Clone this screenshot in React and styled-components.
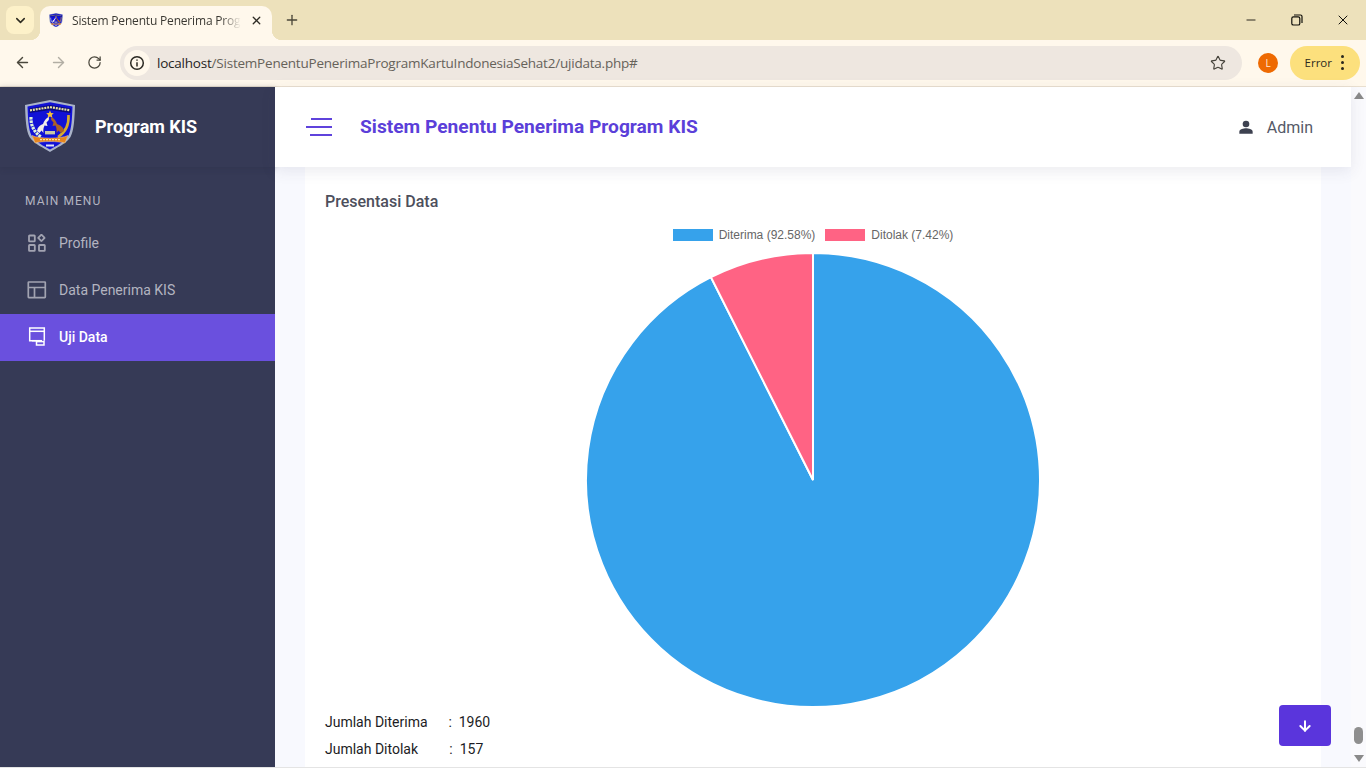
import React from "react";
import styled, { createGlobalStyle } from "styled-components";
import { ChevronDown, X, Plus, ArrowLeft, ArrowRight, RotateCw, Star, Minus, ArrowDown } from "lucide-react";

const Global = createGlobalStyle`
  html, body { margin: 0; padding: 0; height: 100%; overflow: hidden; }
  body { font-family: Roboto, "Liberation Sans", sans-serif; }
  * { box-sizing: border-box; }
`;

const Page = styled.div`
  width: 1366px; height: 768px; display: flex; flex-direction: column; overflow: hidden; background: #e4e4e4;
`;
const TabStrip = styled.div`
  height: 40px; flex: none; background: #ede1bb; display: flex; align-items: flex-end; padding-left: 6px;
`;
const TabSearch = styled.div`
  width: 28px; height: 28px; margin: 0 6px 6px 0; border-radius: 8px; background: #fdf1c9;
  display: flex; align-items: center; justify-content: center; color: #2d2a1f;
`;
const Tab = styled.div`
  position: relative; width: 232px; height: 34px; background: #fff8ec; border-radius: 10px 10px 0 0;
  display: flex; align-items: center; padding: 0 9px 6px 9px; gap: 9px;
  &::before, &::after { content: ""; position: absolute; bottom: 0; width: 10px; height: 10px; }
  &::before { left: -10px; background: radial-gradient(circle at 0 0, transparent 10px, #fff8ec 10.5px); }
  &::after { right: -10px; background: radial-gradient(circle at 100% 0, transparent 10px, #fff8ec 10.5px); }
`;
const TabTitle = styled.span`
  flex: 1; font: 12px "Open Sans", "Noto Sans", sans-serif; letter-spacing: -0.18px; color: #3b3933; white-space: nowrap; overflow: hidden;
  -webkit-mask-image: linear-gradient(90deg, #000 88%, transparent 100%);
  mask-image: linear-gradient(90deg, #000 88%, transparent 100%);
`;
const NewTab = styled.div`
  width: 28px; height: 28px; margin: 0 0 6px 6px; display: flex; align-items: center; justify-content: center; color: #4a4638;
`;
const WindowButtons = styled.div`
  margin-left: auto; align-self: flex-start; height: 40px; display: flex; color: #100f0a;
`;
const WinBtn = styled.div`
  width: 46px; height: 40px; display: flex; align-items: center; justify-content: center;
`;
const Toolbar = styled.div`
  height: 47px; flex: none; background: #fff8ec; border-bottom: 1px solid #e9dfcf; display: flex; align-items: center;
  padding: 0 6px 1px 8px;
`;
const NavBtn = styled.div`
  width: 28px; height: 28px; margin-right: 8px; display: flex; align-items: center; justify-content: center;
  color: ${p => p.$off ? "#b2aea4" : "#4a473c"};
`;
const Omnibox = styled.div`
  margin-left: 4px; flex: 1; height: 34px; border-radius: 17px; background: #eee7e0; display: flex; align-items: center; padding: 0 16px 0 4px;
`;
const InfoChip = styled.div`
  width: 26px; height: 26px; border-radius: 50%; background: #fff8ec; display: flex; align-items: center; justify-content: center; margin-right: 7px;
`;
const Url = styled.div`
  flex: 1; font: 13.5px "Open Sans", "Noto Sans", sans-serif; letter-spacing: -0.22px; color: #66625a; white-space: nowrap;
  b { font-weight: 400; color: #26241f; }
`;
const Avatar = styled.div`
  width: 20px; height: 20px; margin: 0 12px 0 16px; border-radius: 50%; background: #ee6a02; color: #ffe9d6;
  font: 10px "Open Sans", sans-serif; display: flex; align-items: center; justify-content: center;
`;
const ErrorPill = styled.div`
  width: 70px; height: 34px; border-radius: 17px; background: #fce07d; display: flex; align-items: center; justify-content: flex-end; gap: 9px;
  padding-right: 16px; font: 11.5px "Open Sans", sans-serif; color: #2c2a20;
`;
const Dots = styled.div`
  display: flex; flex-direction: column; gap: 3px;
  i { display: block; width: 3px; height: 3px; border-radius: 50%; background: #2a281e; }
`;
const Viewport = styled.div`
  height: 680px; flex: none; display: flex; background: #f8f9fe;
`;
const Sidebar = styled.aside`
  width: 275px; flex: none; background: #363a56; display: flex; flex-direction: column;
`;
const Brand = styled.div`
  height: 80px; flex: none; display: flex; align-items: center; padding: 0 0 2px 25px; gap: 20px;
  font-size: 18px; font-weight: 700; color: #fff;
  background: #363a56; box-shadow: 0 1px 6px rgba(40,42,66,.3);
`;
const MenuLabel = styled.div`
  margin: 27px 0 12px 25px; font-size: 12px; font-weight: 400; letter-spacing: 1.05px; line-height: 14px; color: #b3b4c0;
`;
const MenuItem = styled.div`
  height: 47px; display: flex; align-items: center; padding: 0 0 2px 27px; font-size: 14px;
  background: ${p => p.$active ? "#6a50de" : "transparent"};
  color: ${p => p.$active ? "#fff" : "#b3b4c0"};
  font-weight: ${p => p.$active ? 500 : 400};
`;
const MenuIcon = styled.span`
  width: 20px; height: 20px; margin-right: 12px; display: flex; align-items: center; justify-content: center;
  color: ${p => p.$active ? "#fff" : "#a2a3b1"};
`;
const Main = styled.main`
  position: relative; flex: 1; display: flex; flex-direction: column; min-width: 0;
`;
const TopBar = styled.header`
  position: relative; z-index: 1; height: 80px; flex: none; background: #fff; box-shadow: 0 4px 14px rgba(60,60,100,.1);
  display: flex; align-items: center; padding: 0 38px 0 31px;
`;
const Hamburger = styled.div`
  width: 26px; display: flex; flex-direction: column; align-items: flex-end; gap: 6px; margin-right: 28px;
`;
const BurgerLine = styled.i`
  display: block; height: 2px; background: #5f43dc; width: ${p => p.$w}px;
`;
const AppTitle = styled.h1`
  margin: 0 0 1px; font-size: 19.2px; line-height: 22px; font-weight: 700; color: #5b3fd9; flex: 1;
`;
const UserBox = styled.div`
  display: flex; align-items: center; gap: 13px; font-size: 16px; color: #555a68;
`;
const Content = styled.div`
  flex: 1; min-height: 0; padding: 0 30px; overflow: hidden;
`;
const Card = styled.section`
  height: 100%; background: #fff; padding: 25px 20px 0; display: flex; flex-direction: column; align-items: flex-start;
`;
const CardTitle = styled.h2`
  margin: 0; font-size: 16px; font-weight: 500; line-height: 19px; color: #4d4f5c;
`;
const Legend = styled.div`
  align-self: center; margin-top: 17px; display: flex; gap: 10px; font: 12px "Liberation Sans", Arial, sans-serif; color: #666; line-height: 14px;
`;
const LegendItem = styled.div`
  display: flex; align-items: center; gap: 6px;
`;
const Swatch = styled.i`
  display: block; width: 40px; height: 12px; background: ${p => p.$c};
`;
const Chart = styled.svg`
  align-self: center; margin-top: 10px; flex: none; display: block;
`;
const Stat = styled.div`
  font-size: 14px; line-height: 27px; color: #1c1c24; white-space: pre;
`;
const Stats = styled.div`
  margin-top: 1px;
`;
const FloatBtn = styled.div`
  position: absolute; right: 20px; bottom: 21px; width: 52px; height: 41px; border-radius: 4px; background: #5a35dc;
  display: flex; align-items: center; justify-content: center; color: #fff;
`;
const Scrollbar = styled.div`
  width: 15px; flex: none; background: #fafafd; display: flex; flex-direction: column; align-items: center; padding: 5px 0;
`;
const Arrow = styled.i`
  display: block; width: 0; height: 0; border-left: 5px solid transparent; border-right: 5px solid transparent;
  ${p => p.$down ? "border-top: 7px solid #8a8a8a;" : "border-bottom: 7px solid #8a8a8a;"}
`;
const Thumb = styled.div`
  width: 9px; height: 17px; border-radius: 5px; background: #8f8f8f; margin: auto 0 11px;
`;

const Logo = ({ size = 50 }) => (
  <svg width={size} height={size * 1.04} viewBox="0 0 50 52">
    <path d="M0 5 L25 0 L50 5 C49.5 20 49 30 45.5 37 C41 44 31 48 25 52 C19 48 9 44 4.5 37 C1 30 .5 20 0 5Z" fill="#aab3c8" />
    <path d="M2.5 6.5 L25 2.2 L47.5 6.5 C47 20 46.5 29 43.5 35.5 C39 42.5 31 46 25 49.5 C19 46 11 42.5 6.5 35.5 C3.5 29 3 20 2.5 6.5Z" fill="#1212d6" />
    <path d="M4 8.5 L25 5 L46 8.5 L45.5 13 L25 10 L4.5 13Z" fill="#0b0b7c" />
    <path d="M5 10.3 L25 7.2 L45 10.3" fill="none" stroke="#e9e3a2" strokeWidth="2.2" strokeDasharray="2 .9" />
    <path d="M25 10.5 l1.1 2.5 2.7.3-2 1.8.6 2.7-2.4-1.4-2.4 1.4.6-2.7-2-1.8 2.7-.3z" fill="#f3c13a" />
    <path d="M6 17 C5.5 25 9 32 16 37" fill="none" stroke="#dff3d8" strokeWidth="3.2" strokeDasharray="2.6 .8" />
    <path d="M43.5 15 C44 24 41 32 33 37" fill="none" stroke="#d6a92e" strokeWidth="2.6" />
    <path d="M12 31 C12.5 27 15 25 18 24 C19 21 21 18 24 17 L23.8 20 L21.5 22.5 L22.5 26 L19.5 25.5 C18.5 28 18 30 18.5 33 L16.5 30.5 L14.5 33Z" fill="#f4efe8" />
    <path d="M39 31 C38.5 27 35 25 32 24 C31 21 29 18 26 17 L26.2 20 L28.5 22.5 L27.5 26 L30.5 25.5 C31.5 28 32 30 31.5 33 L33.5 30.5 L36 33Z" fill="#a9602a" />
    <rect x="20" y="31" width="10" height="3.4" fill="#c9c9a6" />
    <path d="M7 35.5 C14 39 36 39 43 35.5 L40 43 C33 41 17 41 10 43Z" fill="#e6841f" stroke="#f2d49a" strokeWidth=".5" />
    <path d="M15 39.6 H35" stroke="#ffe5a0" strokeWidth="1.4" strokeDasharray="2 1" />
    <rect x="21" y="44.5" width="8" height="2" fill="#dfe3f3" />
  </svg>
);

const ProfileIcon = () => (
  <svg width="18" height="18" viewBox="0 0 18 18" fill="none" stroke="currentColor" strokeWidth="1.8">
    <rect x="1" y="1.5" width="5.8" height="5.8" rx=".6" />
    <rect x="11.1" y="1.6" width="4.6" height="4.6" rx=".4" transform="rotate(45 13.4 3.9)" />
    <rect x="1" y="11" width="5.8" height="5.8" rx=".6" />
    <rect x="11" y="11" width="5.8" height="5.8" rx=".6" />
  </svg>
);
const TableIcon = () => (
  <svg width="20" height="18" viewBox="0 0 20 18" fill="none" stroke="currentColor" strokeWidth="1.7">
    <rect x="1.3" y="1" width="17" height="15.6" rx=".5" />
    <path d="M1.3 6.5 H18.3 M7.5 6.5 V16.6" />
  </svg>
);
const TestIcon = () => (
  <svg width="18" height="19" viewBox="0 0 18 19" fill="none" stroke="currentColor" strokeWidth="1.5">
    <path d="M10 13.7 H1.7 V1 H16.3 V13.7" />
    <path d="M1.7 4.3 H16.3" />
    <path d="M4 13.7 H14" />
    <rect x="8.5" y="14.6" width="7.5" height="3.4" />
  </svg>
);
const UserIcon = () => (
  <svg width="16" height="16" viewBox="0 0 24 24" fill="#3d4150">
    <circle cx="12" cy="7.5" r="5" /><path d="M2 22 v-3 c0-3.5 6.5-5 10-5 s10 1.5 10 5 v3z" />
  </svg>
);
const InfoIcon = () => (
  <svg width="16" height="16" viewBox="0 0 16 16" fill="none" stroke="#2b2922" strokeWidth="1.5">
    <circle cx="8" cy="8" r="6.3" /><path d="M8 7.2 V11.5" /><path d="M8 4.4 V5.8" />
  </svg>
);
const RestoreIcon = () => (
  <svg width="12" height="12" viewBox="0 0 12 12" fill="none" stroke="#100f0a" strokeWidth="1.2">
    <rect x=".8" y="2.8" width="8" height="8.2" rx="1.6" /><path d="M3 1 H9.5 Q11 1 11 2.5 V9" />
  </svg>
);

// pie: radius 227 with a 2px white stroke leaves 226 of visible colour
const R = 227;
const C = 228;
const share = 0.9258;
const a = share * 2 * Math.PI;
const px = C + R * Math.sin(a);
const py = C - R * Math.cos(a);

export default function App() {
  return (
    <Page>
      <Global />
      <TabStrip>
        <TabSearch><ChevronDown size={15} strokeWidth={2.4} /></TabSearch>
        <Tab>
          <Logo size={14} />
          <TabTitle>Sistem Penentu Penerima Program KIS</TabTitle>
          <X size={13} strokeWidth={2.4} color="#2d2b24" />
        </Tab>
        <NewTab><Plus size={16} strokeWidth={2} /></NewTab>
        <WindowButtons>
          <WinBtn><Minus size={14} strokeWidth={1.5} /></WinBtn>
          <WinBtn><RestoreIcon /></WinBtn>
          <WinBtn><X size={16} strokeWidth={1.5} /></WinBtn>
        </WindowButtons>
      </TabStrip>
      <Toolbar>
        <NavBtn><ArrowLeft size={17} strokeWidth={2} /></NavBtn>
        <NavBtn $off><ArrowRight size={17} strokeWidth={2} /></NavBtn>
        <NavBtn><RotateCw size={15} strokeWidth={2} /></NavBtn>
        <Omnibox>
          <InfoChip><InfoIcon /></InfoChip>
          <Url><b>localhost</b>/SistemPenentuPenerimaProgramKartuIndonesiaSehat2/ujidata.php#</Url>
          <Star size={16} strokeWidth={1.7} color="#45423a" />
        </Omnibox>
        <Avatar>L</Avatar>
        <ErrorPill>Error<Dots><i /><i /><i /></Dots></ErrorPill>
      </Toolbar>
      <Viewport>
        <Sidebar>
          <Brand><Logo />Program KIS</Brand>
          <MenuLabel>MAIN MENU</MenuLabel>
          <MenuItem><MenuIcon><ProfileIcon /></MenuIcon>Profile</MenuItem>
          <MenuItem><MenuIcon><TableIcon /></MenuIcon>Data Penerima KIS</MenuItem>
          <MenuItem $active><MenuIcon $active><TestIcon /></MenuIcon>Uji Data</MenuItem>
        </Sidebar>
        <Main>
          <TopBar>
            <Hamburger><BurgerLine $w={21} /><BurgerLine $w={26} /><BurgerLine $w={22} /></Hamburger>
            <AppTitle>Sistem Penentu Penerima Program KIS</AppTitle>
            <UserBox><UserIcon />Admin</UserBox>
          </TopBar>
          <Content>
            <Card>
              <CardTitle>Presentasi Data</CardTitle>
              <Legend>
                <LegendItem><Swatch $c="#36a2eb" />Diterima (92.58%)</LegendItem>
                <LegendItem><Swatch $c="#ff6384" />Ditolak (7.42%)</LegendItem>
              </Legend>
              <Chart width={456} height={456} viewBox="0 0 456 456">
                <path d={`M${C} ${C} L${C} 1 A${R} ${R} 0 1 1 ${px} ${py} Z`} fill="#36a2eb" stroke="#fff" strokeWidth="2" />
                <path d={`M${C} ${C} L${px} ${py} A${R} ${R} 0 0 1 ${C} 1 Z`} fill="#ff6384" stroke="#fff" strokeWidth="2" />
              </Chart>
              <Stats>
                <Stat>{"Jumlah Diterima\u00a0\u00a0\u00a0\u00a0\u00a0\u00a0:\u00a0\u00a01960"}</Stat>
                <Stat>{"Jumlah Ditolak\u00a0\u00a0\u00a0\u00a0\u00a0\u00a0\u00a0\u00a0\u00a0:\u00a0\u00a0157"}</Stat>
              </Stats>
            </Card>
          </Content>
          <FloatBtn><ArrowDown size={16} strokeWidth={3} /></FloatBtn>
        </Main>
        <Scrollbar>
          <Arrow />
          <Thumb />
          <Arrow $down />
        </Scrollbar>
      </Viewport>
    </Page>
  );
}
